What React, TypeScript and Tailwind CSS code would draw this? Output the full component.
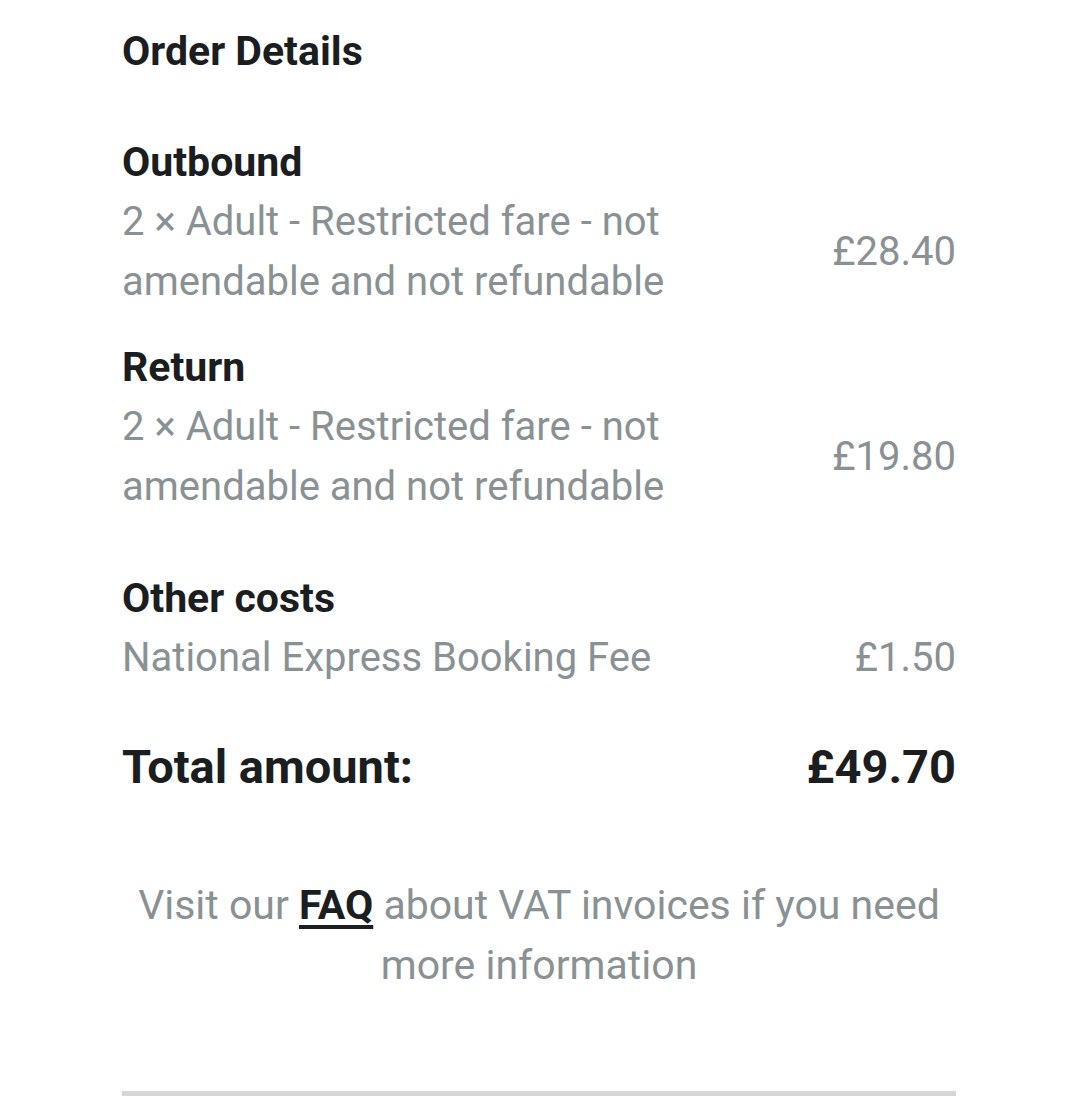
import React from 'react';

const dark = 'text-[#1b1e21]';
const grey = 'text-[#899193]';

function Line({ label, price }: { label: string; price: string }) {
  return (
    <div className="flex items-center justify-between">
      <div className={`max-w-[600px] text-[40px] leading-[60px] ${grey}`}>{label}</div>
      <div className={`text-[40px] leading-[60px] ${grey}`}>{price}</div>
    </div>
  );
}

function Section({ title, children }: { title: string; children: React.ReactNode }) {
  return (
    <div>
      <div className={`text-[41px] font-bold leading-[60px] ${dark}`}>{title}</div>
      {children}
    </div>
  );
}

export default function App() {
  return (
    <div
      className="min-h-[1107px] bg-white pl-[122px] pr-[124px] pt-[21px]"
      style={{ fontFamily: 'Roboto, "Noto Sans", sans-serif' }}
    >
      <div className={`text-[41px] font-bold leading-[60px] ${dark}`}>Order Details</div>

      <div className="mt-[51px]">
        <Section title="Outbound">
          <Line label="2 × Adult - Restricted fare - not amendable and not refundable" price="£28.40" />
        </Section>
      </div>

      <div className="mt-[25px]">
        <Section title="Return">
          <Line label="2 × Adult - Restricted fare - not amendable and not refundable" price="£19.80" />
        </Section>
      </div>

      <div className="mt-[51px]">
        <Section title="Other costs">
          <Line label="National Express Booking Fee" price="£1.50" />
        </Section>
      </div>

      <div className={`mt-[49px] flex items-center justify-between text-[47px] font-bold leading-[60px] ${dark}`}>
        <span>Total amount:</span>
        <span>£49.70</span>
      </div>

      <p className={`mt-[78px] text-center text-[41px] leading-[60px] ${grey}`}>
        Visit our{' '}
        <a href="#" className={`font-bold underline decoration-[4px] underline-offset-[6px] ${dark}`}>
          FAQ
        </a>{' '}
        about VAT invoices if you need more information
      </p>

      <div className="mt-[96px] h-[5px] bg-[#d6d6d6]" />
    </div>
  );
}
